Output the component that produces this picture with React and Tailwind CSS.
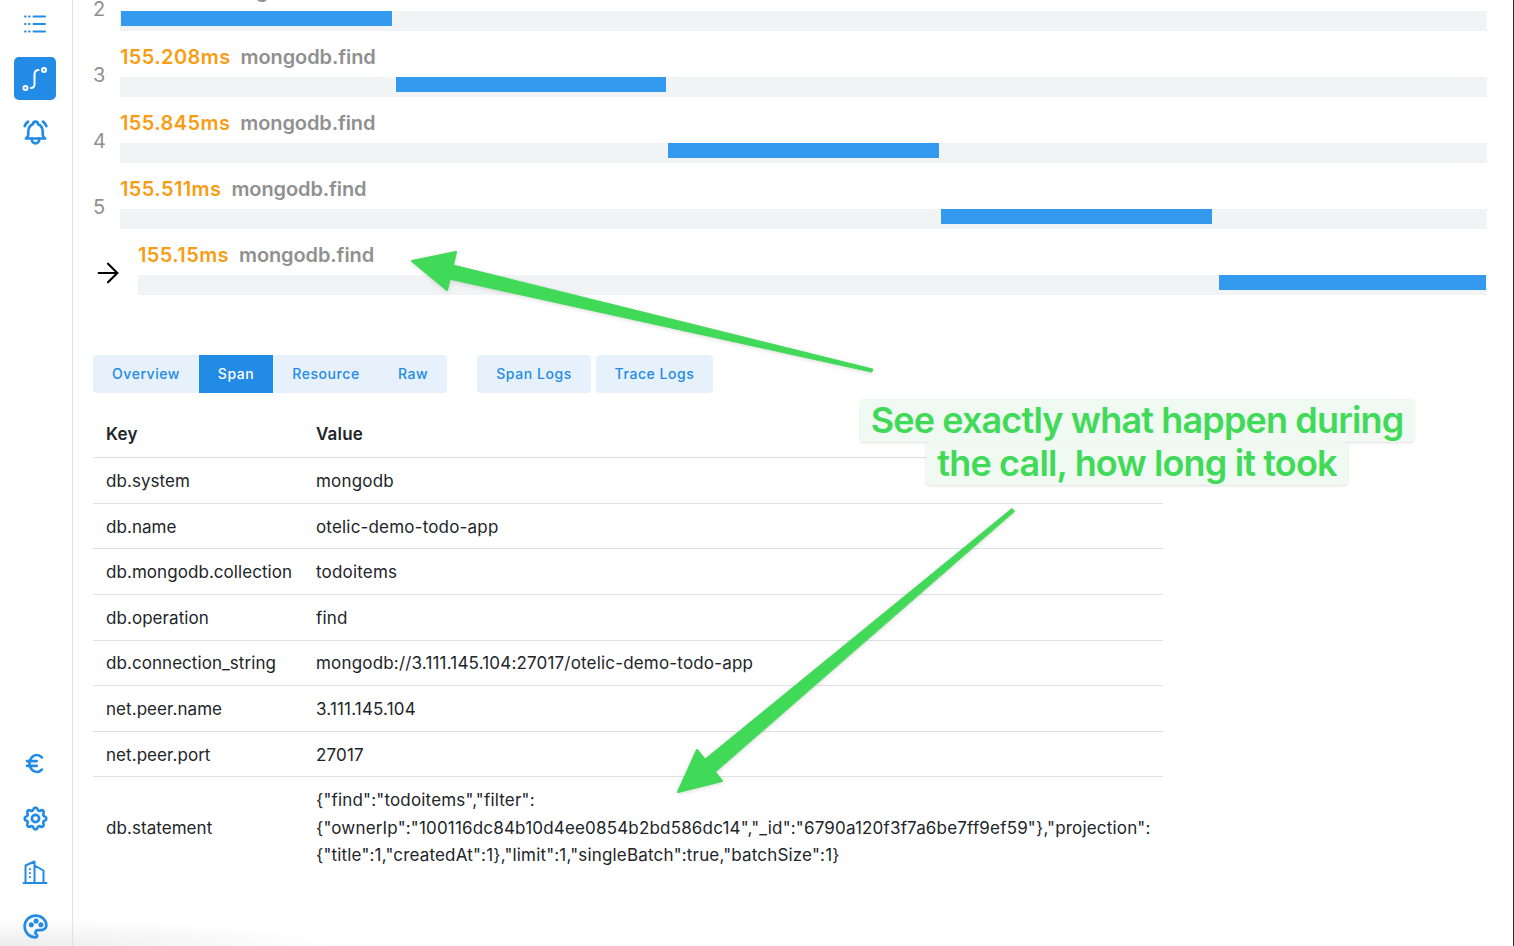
import { ArrowRight } from 'lucide-react';
import { TbBellRinging, TbCurrencyEuro, TbSettings, TbPalette } from 'react-icons/tb';

const spans = [
  { n: 2, time: '155.3ms', offset: 'ml-px', width: 'w-[271px]' },
  { n: 3, time: '155.208ms', offset: 'ml-[276px]', width: 'w-[270px]' },
  { n: 4, time: '155.845ms', offset: 'ml-[548px]', width: 'w-[271px]' },
  { n: 5, time: '155.511ms', offset: 'ml-[821px]', width: 'w-[271px]' },
];

const rows = [
  ['db.system', 'mongodb'],
  ['db.name', 'otelic-demo-todo-app'],
  ['db.mongodb.collection', 'todoitems'],
  ['db.operation', 'find'],
  ['db.connection_string', 'mongodb://3.111.145.104:27017/otelic-demo-todo-app'],
  ['net.peer.name', '3.111.145.104'],
  ['net.peer.port', '27017'],
];

function ListIcon() {
  return (
    <svg width="24" height="24" viewBox="0 0 24 24" fill="none" stroke="#228be6" strokeWidth="2" strokeLinecap="round">
      <path d="M2 4.500h.6M6 4.500h.6M10.500 4.500h11.500M2 12h.6M6 12h.6M10.500 12h11.500M2 19.500h.6M6 19.500h.6M10.500 19.500h11.500" />
    </svg>
  );
}

function RouteIcon() {
  return (
    <svg width="26" height="26" viewBox="0 0 26 26" fill="none" stroke="white" strokeWidth="2" strokeLinecap="round">
      <circle cx="3.500" cy="22" r="2" />
      <circle cx="22" cy="4" r="2" />
      <path d="M9 22c2.500 0 3.500-1.500 3.500-4V8.500c0-3 1-4.500 4-4.500" />
    </svg>
  );
}

function BuildingIcon() {
  return (
    <svg className="mb-[2px] mt-px" width="26" height="26" viewBox="0 0 26 26" fill="none" stroke="#228be6" strokeWidth="2" strokeLinecap="round" strokeLinejoin="round">
      <path d="M1.500 24h23M3.500 24V6.500l9-4V24M12.500 6.500l9 5V24" />
      <path d="M8 10v.2M8 14v.2M8 18v.2" />
    </svg>
  );
}

function Label({ time }) {
  return (
    <div className="flex h-[24px] items-center gap-[10px] whitespace-nowrap text-[20px] font-semibold leading-6">
      <span className="tracking-[0.4px] text-[#f89d13]">{time}</span>
      <span className="tracking-[-0.1px] text-[#909090]">mongodb.find</span>
    </div>
  );
}

export default function App() {
  return (
    <div className="relative flex h-[946px] overflow-hidden bg-white font-['Inter',sans-serif] text-[#212529]">
      {/* Window shadow, under the sidebar icons */}
      <div className="absolute bottom-0 left-0 h-[28px] w-[340px] bg-[radial-gradient(ellipse_at_bottom_left,#ececec,transparent_70%)]" />

      {/* Sidebar */}
      <aside className="relative flex w-[73px] shrink-0 flex-col items-center border-r border-[#dee2e6] pr-[2px] text-[#228be6]">
        <div className="mt-[12px] flex h-6 items-center justify-center"><ListIcon /></div>
        <div className="mt-[21px] flex h-[43px] w-[42px] items-center justify-center rounded-[5px] bg-[#228be6]"><RouteIcon /></div>
        <TbBellRinging className="mt-[18px]" size={29} strokeWidth={2.2} />
        <div className="mt-auto flex flex-col items-center gap-[25px] pb-[5px]">
          <TbCurrencyEuro className="mb-px" size={29} strokeWidth={2.2} />
          <TbSettings size={29} strokeWidth={2.2} />
          <BuildingIcon />
          <TbPalette size={29} strokeWidth={2.2} />
        </div>
      </aside>

      {/* Main */}
      <main className="relative flex-1 pl-5 pr-[27px]">
        <div className="-mt-[21px]">
          {spans.map((s) => (
            <div key={s.n} className="flex h-[66px]">
              <div className="flex w-[27px] items-center pb-[6px] text-[20px] text-[#909090]">{s.n}</div>
              <div className="flex-1">
                <Label time={s.time} />
                <div className="mt-2 h-5 bg-[#f1f3f5]">
                  <div className={`h-[15px] bg-[#339af0] ${s.offset} ${s.width}`} />
                </div>
              </div>
            </div>
          ))}
          <div className="flex h-[66px]">
            <div className="flex w-[27px] items-center pb-[6px] text-black">
              <ArrowRight size={32} strokeWidth={1.6} className="shrink-0 -translate-x-[1px]" />
            </div>
            <div className="flex-1">
              <div className="ml-[18px]"><Label time="155.15ms" /></div>
              <div className="ml-[18px] mt-2 flex h-5 justify-end bg-[#f1f3f5]">
                <div className="mr-px h-[15px] w-[267px] bg-[#339af0]" />
              </div>
            </div>
          </div>
        </div>

        {/* Tabs */}
        <div className="mt-[46px] flex text-[14px] font-medium tracking-[0.55px] text-[#228be6]">
          <div className="flex h-[38px] w-[354px] overflow-hidden rounded-[4px] bg-[#e7f1fb]">
            <button className="w-[106px] pb-px text-center">Overview</button>
            <button className="w-[74px] bg-[#228be6] pb-px text-white">Span</button>
            <button className="w-[106px] pb-px">Resource</button>
            <button className="w-[68px] pb-px">Raw</button>
          </div>
          <button className="ml-[30px] h-[38px] w-[114px] rounded-[4px] bg-[#e7f1fb] pb-px">Span Logs</button>
          <button className="ml-[5px] h-[38px] w-[117px] rounded-[4px] bg-[#e7f1fb] pb-px">Trace Logs</button>
        </div>

        {/* Attributes table */}
        <table className="mt-[20px] w-[1070px] table-fixed border-collapse text-[17px] leading-[27.4px] tracking-[0.18px]">
          <thead>
            <tr className="border-b border-[#dee2e6] text-left">
              <th className="w-[211px] py-[8.4px] pl-[13px] font-semibold">Key</th>
              <th className="py-[8.4px] pl-[12px] font-semibold">Value</th>
            </tr>
          </thead>
          <tbody>
            {rows.map(([k, v]) => (
              <tr key={k} className="border-b border-[#dee2e6]">
                <td className="whitespace-nowrap pb-[7.4px] pl-[13px] pt-[9.8px] tracking-[0.06px]">{k}</td>
                <td className="pb-[7.4px] pl-[12px] pt-[9.8px]">{v}</td>
              </tr>
            ))}
            <tr>
              <td className="pb-[7.4px] pl-[13px] pt-[9.8px] tracking-[0.06px]">db.statement</td>
              <td className="whitespace-nowrap pb-[7.4px] pl-[12px] pt-[9.8px]">
                {'{"find":"todoitems","filter":'}<br />
                {'{"ownerIp":"100116dc84b10d4ee0854b2bd586dc14","_id":"6790a120f3f7a6be7ff9ef59"},"projection":'}<br />
                {'{"title":1,"createdAt":1},"limit":1,"singleBatch":true,"batchSize":1}'}
              </td>
            </tr>
          </tbody>
        </table>
      </main>

      {/* Annotation arrows */}
      <svg className="pointer-events-none absolute left-0 top-0 drop-shadow-sm" width="1514" height="946" fill="#40d958" stroke="#40d958" strokeLinejoin="round" strokeLinecap="round">
        <path d="M872.500 369L453 265L449 279L871.500 372Z" strokeWidth="1" />
        <path d="M412 261L456 252L447 290Z" strokeWidth="2" />
        <path d="M1014.500 511L1012 508.500L704 760L715 772Z" strokeWidth="1" />
        <path d="M678 792L697 750L722 781Z" strokeWidth="2" />
      </svg>

      {/* Annotation callout */}
      <div className="absolute left-[860px] top-[399px] flex w-[554px] flex-col items-center whitespace-nowrap text-[36px] font-semibold leading-[43px] tracking-[-0.85px] text-[#40d958]">
        <div className="rounded-[4px] bg-[#f0f9f2] px-[11px] shadow-sm">See exactly what happen during</div>
        <div className="rounded-[4px] bg-[#f0f9f2] px-[11px] shadow-sm">the call, how long it took</div>
      </div>

      {/* Window edge */}
      <div className="absolute inset-y-0 right-0 w-px bg-[#2b2b2b]" />
    </div>
  );
}
